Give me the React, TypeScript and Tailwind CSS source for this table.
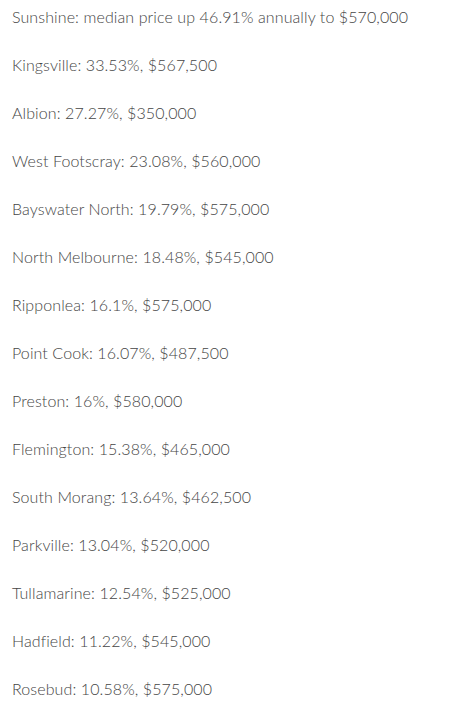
import React from "react";

const rows = [
  "Sunshine: median price up 46.91% annually to $570,000",
  "Kingsville: 33.53%, $567,500",
  "Albion: 27.27%, $350,000",
  "West Footscray: 23.08%, $560,000",
  "Bayswater North: 19.79%, $575,000",
  "North Melbourne: 18.48%, $545,000",
  "Ripponlea: 16.1%, $575,000",
  "Point Cook: 16.07%, $487,500",
  "Preston: 16%, $580,000",
  "Flemington: 15.38%, $465,000",
  "South Morang: 13.64%, $462,500",
  "Parkville: 13.04%, $520,000",
  "Tullamarine: 12.54%, $525,000",
  "Hadfield: 11.22%, $545,000",
  "Rosebud: 10.58%, $575,000",
];

const App = () => {
  return (
    <div className="min-h-[705px] bg-white px-3 pt-[5px] font-['Lato',sans-serif] text-[16px] font-light text-[#454545] [font-variant-ligatures:none]">
      {rows.map((r) => (
        <p key={r} className="mb-6 leading-6 tracking-[0.1px]">
          {r}
        </p>
      ))}
    </div>
  );
};

export default App;
